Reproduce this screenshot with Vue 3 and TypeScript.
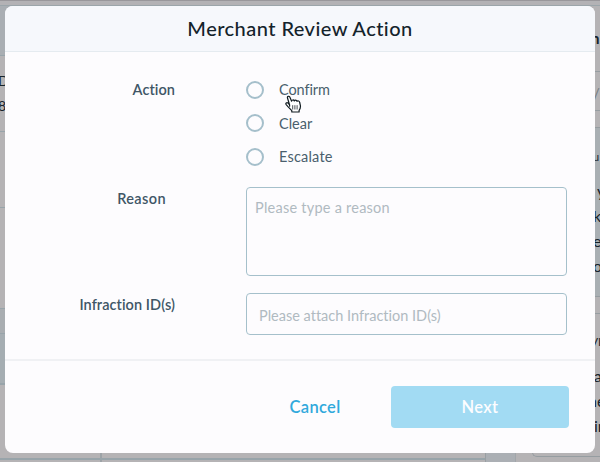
<script setup lang="ts">
import { ref } from 'vue'

const actions: string[] = ['Confirm', 'Clear', 'Escalate']
const selected = ref<string | null>(null)
const reason = ref('')
const infractionIds = ref('')
</script>

<template>
  <div class="screen">
    <div class="page">
      <div class="topbar"></div>
      <div class="columns">
        <div class="main">
          <div class="row head"></div>
          <div class="row summary"><span>D</span><span>8</span></div>
          <div class="row gap-row"></div>
          <div class="row block"></div>
          <div class="row tint-one"></div>
          <div class="row tint-two"></div>
          <div class="row table"><i></i></div>
          <div class="row foot"><i></i></div>
        </div>
        <div class="gutter"></div>
        <div class="side">
          <div class="srow s1"><b>n</b></div>
          <div class="srow s2"><span>/|</span></div>
          <div class="srow s3"></div>
          <div class="srow s4"><small>u</small><span class="y">y</span><span>k</span><span>e</span><span>o</span></div>
          <div class="srow s5"></div>
          <div class="srow s6"><small>VI</small><span>a</span><span class="ne">ne</span><span>in</span></div>
        </div>
      </div>
    </div>

    <section class="modal" role="dialog">
      <header><h1>Merchant Review Action</h1></header>
      <div class="body">
        <div class="field actions">
          <div class="label">Action</div>
          <div class="options">
            <label v-for="a in actions" :key="a" class="option">
              <input v-model="selected" type="radio" name="action" :value="a" />
              <span>{{ a }}</span>
            </label>
          </div>
        </div>
        <div class="field reason">
          <div class="label">Reason</div>
          <textarea v-model="reason" placeholder="Please type a reason"></textarea>
        </div>
        <div class="field ids">
          <div class="label">Infraction ID(s)</div>
          <input v-model="infractionIds" class="text" type="text" placeholder="Please attach Infraction ID(s)" />
        </div>
      </div>
      <footer>
        <button class="cancel" type="button">Cancel</button>
        <button class="next" type="button">Next</button>
      </footer>
    </section>

    <svg class="pointer" width="17" height="19" viewBox="0 0 17 19">
      <path
        d="M4.6 11.2V10L2.5 3C2 1.3 4.1.6 4.8 2.1L6.6 6.2C6.8 4.8 8.7 4.4 9.3 6C9.8 4.8 11.5 4.8 12 6.3C12.8 5.5 14.5 5.9 14.7 7.5L15.4 10.7C15.6 12.6 15.1 14.2 14.1 15.3V17H6.8V15.6L3.4 12.2L1.2 9.6C.2 8.2 1.8 7.1 3 8.1L4.6 9.8Z"
        fill="#fff" stroke="#111b20" stroke-width="1.2" stroke-linejoin="round" />
      <path d="M7.7 10.2v4.3M9.9 10.2v4.3M12.1 10.2v4.3" stroke="#343b40" stroke-width=".9" />
    </svg>
  </div>
</template>

<style>
body { margin: 0; overflow: hidden; }
</style>

<style scoped>
* { box-sizing: border-box; }
.screen {
  position: relative; width: 600px; height: 462px; overflow: hidden;
  font-family: Lato, "Open Sans", sans-serif; font-variant-ligatures: none; color: #4a5f6d;
}
.page { height: 462px; background: #b5b3b5; color: #17232b; overflow: hidden; }
.topbar { height: 6px; border-top: 1px solid #99979b; border-bottom: 1px solid #9ba5aa; background: #b3b2b5; }
.columns { display: flex; height: 456px; }
.main { width: 485px; display: flex; flex-direction: column; }
.row { border-bottom: 1px solid #98a4aa; flex: none; }
.head { height: 50px; background: #a9aeb3; }
.summary { height: 76px; padding-top: 12px; display: flex; flex-direction: column; font-size: 14px; line-height: 25px; }
.summary span { margin-left: -2px; }
.gap-row { height: 76px; }
.block { height: 101px; }
.tint-one { height: 25px; background: #a9adb1; }
.tint-two { height: 51px; background: #a5adb2; border-bottom-width: 2px; }
.table { height: 75px; border-bottom-width: 2px; }
.foot { height: 2px; border: 0; }
.table i, .foot i { display: block; height: 100%; margin-left: 100px; border-left: 2px solid #9da3a7; }
.gutter { width: 31px; background: #abafb4; border-left: 1px solid #999fa3; border-right: 1px solid #a1a6aa; }
.side { width: 84px; display: flex; flex-direction: column; padding-left: 16px; overflow: hidden; }
.srow { flex: none; border-bottom: 1px solid #969da1; padding-left: 61px; font-size: 15px; white-space: nowrap; }
.s1 { height: 66px; padding-top: 21px; line-height: 22px; }
.s1 b { margin-left: -2px; }
.s2 { height: 39px; padding-top: 10px; line-height: 22px; color: #747c81; }
.s3 { height: 17px; }
.s4 { height: 169px; background: #a9afb3; display: flex; flex-direction: column; padding-top: 16px; line-height: 25px; }
.s4 small { font-size: 11px; line-height: 25px; height: 34px; }
.s4 span { font-size: 16px; }
.s4 .y { margin-left: 4px; }
.s5 { height: 17px; }
.s6 { height: 143px; display: flex; flex-direction: column; padding-top: 15px; line-height: 25px; border-radius: 0 0 0 5px; border-left: 1px solid #969da1; }
.s6 small { font-size: 12px; height: 34px; margin-left: -4px; }
.s6 span { font-size: 16px; }
.s6 .ne { margin-left: -6px; }

.modal {
  position: absolute; left: 5px; top: 6px; width: 590px; height: 447px;
  background: #fdfcfe; border-radius: 8px; overflow: hidden; display: flex; flex-direction: column;
}
header {
  height: 46px; flex: none; display: flex; align-items: center; justify-content: center; padding-bottom: 2px;
  background: #f6f8fc; border-bottom: 1px solid #e5ebf0;
}
h1 { margin: 0; font-size: 20px; line-height: 24px; font-weight: 500; color: #14232b; letter-spacing: .45px; white-space: nowrap; }
.body { flex: none; height: 309px; border-bottom: 2px solid #f0f1f4; padding: 21px 27px 0 0; display: flex; flex-direction: column; }
.field { display: grid; grid-template-columns: 170px 321px; column-gap: 71px; }
.label { text-align: right; font-size: 14.5px; font-weight: 600; line-height: 20px; letter-spacing: .07px; color: #405666; white-space: nowrap; }
.actions { height: 114px; }
.actions .label { padding-top: 7px; }
.options { display: flex; flex-direction: column; }
.option { height: 33.6px; display: flex; align-items: center; gap: 15px; font-size: 14.5px; }
.option:first-child { letter-spacing: -.1px; }
.option:last-child { letter-spacing: .2px; }
.option input { appearance: none; width: 18px; height: 18px; margin: 0; border: 2px solid #a5bfcb; border-radius: 50%; background: #fdfcfe; }
.option input:checked { background: #31a9dc; }
.reason { height: 106px; }
.reason .label { padding: 2px 9px 0 0; letter-spacing: .4px; }
.ids .label { padding-top: 2px; }
textarea, .text {
  display: block; width: 321px; margin: 0; border: 1px solid #a5c0cb; border-radius: 4px; outline: 0;
  background: transparent; resize: none; font-family: inherit; font-variant-ligatures: none; font-size: 14.5px; color: #405666;
}
textarea { height: 89px; padding: 10px 8px; line-height: 20px; letter-spacing: .24px; }
.text { height: 42px; padding: 3px 12px 0; }
::placeholder { color: #b0bac1; opacity: 1; }
footer { flex: 1; display: flex; padding: 25px 26px 0 0; justify-content: flex-end; align-items: flex-start; gap: 35px; }
button { border: 0; margin: 0; padding: 0 0 1px; height: 42px; font-family: inherit; font-size: 16.5px; font-weight: 600; letter-spacing: .35px; cursor: pointer; }
.cancel { width: 82px; background: transparent; color: #31a9dc; }
.next { width: 178px; background: #a2dbf3; color: #fdfdff; border-radius: 4px; }
.pointer { position: absolute; left: 285px; top: 95px; }
</style>
